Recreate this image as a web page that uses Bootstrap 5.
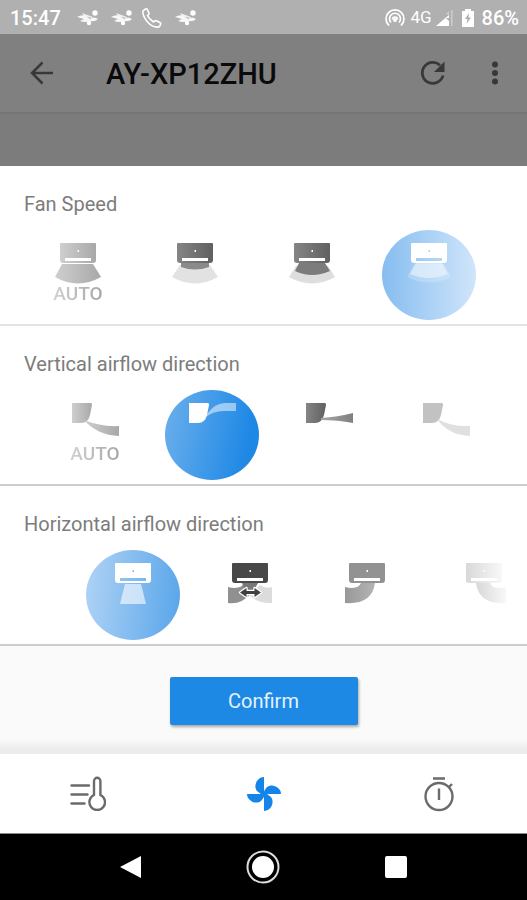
<!DOCTYPE html>
<html lang="en">
<head>
<meta charset="utf-8">
<meta name="viewport" content="width=device-width, initial-scale=1">
<title>AY-XP12ZHU</title>
<link rel="stylesheet" href="https://cdn.jsdelivr.net/npm/bootstrap@5.3.0/dist/css/bootstrap.min.css">
<style>
body{font-family:Roboto,"Liberation Sans",sans-serif;background:#fafafa;color:#757575}
svg{display:block;flex-shrink:0}
.statusbar{height:34px;background:#b0b0b0;color:#fff;padding:2px 8px 0 10px;font-size:20px;font-weight:500}
.status-net{font-size:17px;font-weight:400}
.appbar{height:80px;background:#808080;border-bottom:2px solid #757575;padding:0 20px 0 28px;color:#383838}
.appbar h1{font-size:29px;font-weight:500;color:#0a0a0a;margin-left:50px;padding-top:2px}
.dimmed{height:52px;background:#7c7c7c}
.bare{border:0;background:none;padding:0;color:inherit}
.refresh{margin-right:36px}
.panel{height:160px;background:#fff;border-bottom:2px solid #cdcdcd;overflow:hidden}
.panel-soft{border-bottom-color:#e4e4e4}
.panel h2{font-size:20px;font-weight:400;line-height:24px;padding:26px 24px 0;margin:0 0 14px;color:#7c7c7c}
.options{gap:23px;overflow:hidden}
.start-1{padding-left:31px}
.start-2{padding-left:48px}
.start-3{padding-left:86px}
.option{width:94px;height:90px;flex:none;border:0;padding:0;background:none;border-radius:50%;font-size:19px;font-weight:500;line-height:20px}
.auto-label{background:linear-gradient(90deg,#d2d2d2,#a4a4a4);-webkit-background-clip:text;background-clip:text;color:transparent}
.on-light{background:linear-gradient(90deg,#86bdf0,#d0e5fa)}
.on-strong{background:linear-gradient(100deg,#6cb0ec,#1e88e5 85%)}
.on-mid{background:linear-gradient(95deg,#b0d3f5,#58a5ea)}
.confirm{width:188px;height:48px;background:#1e88e5;color:#e3f2fd;font-size:20px;border:0;border-radius:2px;box-shadow:1px 2px 3px #0005}
.confirm-area{height:108px;padding-top:31px;background:linear-gradient(#fafafa 86%,#ececec 96%)}
.tabs{height:80px;background:#fff;color:#6b6b6b;border-bottom:1px solid #888}
.sysnav{height:66px;background:#000;color:#fff;padding:0 65px}
</style>
<script defer src="https://cdn.jsdelivr.net/npm/bootstrap@5.3.0/dist/js/bootstrap.bundle.min.js"></script>
</head>
<body>
<svg width="0" height="0" class="position-absolute" aria-hidden="true">
<defs>
<linearGradient id="gAuto"><stop stop-color="#cfcfcf"/><stop offset="1" stop-color="#a8a8a8"/></linearGradient>
<linearGradient id="gDark"><stop stop-color="#858585"/><stop offset="1" stop-color="#606060"/></linearGradient>
<linearGradient id="gPale"><stop stop-color="#d8d8d8"/><stop offset="1" stop-color="#f8f8f8"/></linearGradient>
<linearGradient id="gFade"><stop stop-color="#a6a6a6"/><stop offset="1" stop-color="#808080"/></linearGradient>
<linearGradient id="gBend"><stop stop-color="#989898"/><stop offset="1" stop-color="#b4b4b4"/></linearGradient>
<path id="unit" fill-rule="evenodd" d="M29 14q0-1 1-1H64q1 0 1 1V30q0 3-3 3H32q-3 0-3-3ZM34 28V31H60V28ZM46.500 20V22H48V20Z"/>
<path id="side" d="M24 13H43Q44 13 44 15L42 25Q40 33 33 33H24Z"/>
<g id="leaf" fill="#fff"><path d="M0 8Q5 5 9 7L13 10Q17 7 21 10Q18 13 13 12Q8 14 3 12L7 10Z" opacity=".9"/><path d="M5 4 16 8 15 9 7 7Z" opacity=".8"/><circle cx="18" cy="4" r="2.700"/><circle cx="12" cy="14" r="2.200"/></g>
</defs>
</svg>

<header>
<div class="statusbar d-flex align-items-center justify-content-between">
<div class="d-flex align-items-center">
<span class="me-3">15:47</span>
<svg width="22" height="18" class="me-2"><use href="#leaf"/></svg>
<svg width="22" height="18" class="ms-1 me-2"><use href="#leaf"/></svg>
<svg width="22" height="22" viewBox="0 0 22 22" class="me-2" fill="none" stroke="#fff" stroke-width="1.600"><path d="M2 4Q5 1 6 2L8 6Q8 8 6.500 8.500Q8 12 12.500 15Q14 13 16 14L19.500 16Q20.500 17 18 20Q12 21 6.500 15 1 8 2 4Z"/></svg>
<svg width="22" height="18" class="ms-1"><use href="#leaf"/></svg>
</div>
<div class="d-flex align-items-center">
<svg width="22" height="20" viewBox="0 0 22 20" class="me-1" fill="none" stroke="#fff" stroke-width="1.700"><path d="M5 17.500A9 9 0 1 1 17 17.500M7 14.500A5.500 5.500 0 1 1 15 14.500"/><path d="M8.500 11.500a2.500 2.500 0 1 1 5 0"/><circle cx="11" cy="12" r="1.200" fill="#fff"/></svg>
<span class="status-net">4G</span>
<svg width="18" height="18" viewBox="0 0 18 18" class="mx-1"><path d="M15 1V17H16.500V1ZM10 5 13 2V6Z" fill="#ccc"/><path d="M0 17 13 6V9H10L13 12V17Z" fill="#fff"/></svg>
<svg width="12" height="18" viewBox="0 0 12 18" class="ms-1 me-2"><path fill="#fff" fill-rule="evenodd" d="M3 0H9V2H12V18H0V2H3ZM7 4 3 10H5.500L4.500 15 9 8.500H6.500Z"/></svg>
<span>86%</span>
</div>
</div>
<div class="appbar d-flex align-items-center">
<button class="bare" type="button" aria-label="Back"><svg width="28" height="28" viewBox="0 0 28 28" fill="none" stroke="currentColor" stroke-width="2.500"><path d="M25 14H4M14.500 3.500 4 14 14.500 24.500"/></svg></button>
<h1 class="mb-0 me-auto">AY-XP12ZHU</h1>
<button class="bare refresh" type="button" aria-label="Refresh"><svg width="28" height="28" viewBox="0 0 28 28"><path d="M24 16.500A10.500 10.500 0 1 1 21 6.200" fill="none" stroke="currentColor" stroke-width="2.800"/><path d="M25.500 2.500V13H15Z" fill="currentColor"/></svg></button>
<button class="bare" type="button" aria-label="More options"><svg width="24" height="28" viewBox="0 0 24 28" fill="currentColor"><circle cx="12" cy="5.500" r="3"/><circle cx="12" cy="14" r="3"/><circle cx="12" cy="22.500" r="3"/></svg></button>
</div>
</header>
<div class="dimmed"></div>
<main>
<section class="panel panel-soft">
<h2>Fan Speed</h2>
<div class="options d-flex start-1">
<button class="option d-flex flex-column align-items-center" type="button"><svg width="94" height="54" fill="url(#gAuto)"><use href="#unit"/><path d="M31 34H62L70 47Q47 60 24 47Z"/></svg><span class="auto-label">AUTO</span></button>
<button class="option" type="button" aria-label="Low"><svg width="94" height="90"><use href="#unit" fill="url(#gDark)"/><path d="M32 35H62L70 47Q47 60 24 47Z" fill="#e2e2e2"/><path d="M33 33H61V37Q47 42 33 37Z" fill="#8a8a8a"/></svg></button>
<button class="option" type="button" aria-label="Medium"><svg width="94" height="90"><use href="#unit" fill="url(#gDark)"/><path d="M31 36H63L70 47Q47 60 24 47Z" fill="#dedede"/><path d="M34 33H60L65 41Q47 49 30 41Z" fill="#7c7c7c"/></svg></button>
<button class="option on-light" type="button" aria-label="High" aria-pressed="true"><svg width="94" height="90" fill="#fff"><use href="#unit"/><path d="M32 34H62L69 47Q47 58 25 47Z" opacity=".2"/><path d="M34 33H60L66 44Q47 52 28 44Z" opacity=".45"/></svg></button>
</div>
</section>
<section class="panel">
<h2>Vertical airflow direction</h2>
<div class="options d-flex start-2">
<button class="option d-flex flex-column align-items-center" type="button"><svg width="94" height="54" fill="url(#gAuto)"><use href="#side"/><path d="M36 30Q53 37 71 36V46Q49 45 36 30Z"/></svg><span class="auto-label">AUTO</span></button>
<button class="option on-strong" type="button" aria-label="Upward" aria-pressed="true"><svg width="94" height="90" fill="#fff"><use href="#side"/><path d="M42 24Q50 13 60 13H71V21H62Q49 20 41 27Z" opacity=".5"/></svg></button>
<button class="option" type="button" aria-label="Straight"><svg width="94" height="90"><use href="#side" fill="url(#gDark)"/><path d="M39 28Q56 27 71 23V33Q56 30 39 30Z" fill="url(#gFade)"/></svg></button>
<button class="option" type="button" aria-label="Downward"><svg width="94" height="90"><use href="#side" fill="#c2c2c2"/><path d="M38 29Q53 37 71 36V46Q49 45 38 29Z" fill="#e0e0e0"/></svg></button>
</div>
</section>
<section class="panel">
<h2>Horizontal airflow direction</h2>
<div class="options d-flex start-3">
<button class="option on-mid" type="button" aria-label="Center" aria-pressed="true"><svg width="94" height="90" fill="#fff"><use href="#unit"/><path d="M39 34H55L60 54H34Z" opacity=".6"/></svg></button>
<button class="option" type="button" aria-label="Swing"><svg width="94" height="90"><path d="M25 37Q38 40 41 33H54L49 43Q38 55 25 53Z" fill="#909090"/><path d="M69 37Q62 39 57 35L46 45Q55 54 69 53Z" fill="#dcdcdc"/><path d="M39 33H55L51 40H42Z" fill="#777"/><use href="#unit" fill="#484848"/><path d="M37 42.500 43.500 38V41H51.500V38L58 42.500 51.500 47V44H43.500V47Z" fill="#404040" stroke="#fff" stroke-width="2.400" stroke-linejoin="round" paint-order="stroke"/></svg></button>
<button class="option" type="button" aria-label="Left"><svg width="94" height="90"><use href="#unit" fill="#929292"/><path d="M25 37Q38 40 41 33H55Q52 55 25 53Z" fill="url(#gBend)"/></svg></button>
<button class="option" type="button" aria-label="Right"><svg width="94" height="90" fill="url(#gPale)"><use href="#unit"/><path d="M69 37Q56 40 53 33H39Q42 55 69 53Z"/></svg></button>
</div>
</section>
<div class="confirm-area text-center"><button class="confirm" type="button">Confirm</button></div>
</main>
<footer>
<nav class="tabs row g-0 align-items-center" aria-label="Sections">
<a class="col d-flex justify-content-center text-reset" href="#temperature" aria-label="Temperature"><svg width="36" height="36" viewBox="0 0 36 36" fill="none" stroke="currentColor" stroke-width="2.400" stroke-linecap="round"><path d="M1.500 9.500H19M1.500 18.500H17.500M1.500 27.500H14.500M24 19V5a3.200 3.200 0 0 1 6.400 0V19a7.800 7.800 0 1 1-6.400 0Z"/></svg></a>
<a class="col d-flex justify-content-center text-reset" href="#fan" aria-label="Fan" aria-current="page"><svg width="36" height="36" viewBox="0 0 36 36" fill="#1584e8"><path id="blade" d="M18 1C11 1 7 10 11 15Q14 18 18 19Z"/><use href="#blade" transform="rotate(90 18 18)"/><use href="#blade" transform="rotate(180 18 18)"/><use href="#blade" transform="rotate(270 18 18)"/></svg></a>
<a class="col d-flex justify-content-center text-reset" href="#timer" aria-label="Timer"><svg width="36" height="36" viewBox="0 0 36 36" fill="none" stroke="currentColor" stroke-width="2.400"><circle cx="18" cy="20.500" r="13.500"/><path d="M12 2.500H24M18 12.500V24M28 11 31 8"/></svg></a>
</nav>
<div class="sysnav d-flex align-items-center">
<button class="bare col d-flex justify-content-center" type="button" aria-label="Back"><svg width="22" height="24" viewBox="0 0 22 24" fill="#fff"><path d="M21 1V23L0 12Z"/></svg></button>
<button class="bare col d-flex justify-content-center" type="button" aria-label="Home"><svg width="34" height="34" viewBox="0 0 34 34"><circle cx="17" cy="17" r="15.500" fill="none" stroke="#ddd" stroke-width="2"/><circle cx="17" cy="17" r="11" fill="#fff"/></svg></button>
<button class="bare col d-flex justify-content-center" type="button" aria-label="Recent apps"><svg width="24" height="24" viewBox="0 0 24 24"><rect x="1" y="1" width="22" height="22" rx="2" fill="#fff"/></svg></button>
</div>
</footer>
</body>
</html>
